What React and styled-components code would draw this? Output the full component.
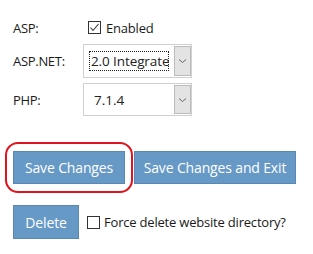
import React from "react";
import styled, { createGlobalStyle } from "styled-components";

const Global = createGlobalStyle`
  html, body { margin: 0; padding: 0; background: #fff; }
  body { font-family: "Open Sans", "Noto Sans", sans-serif; color: #222; }
`;

const Page = styled.div`
  position: relative;
  width: 313px;
  height: 254px;
  padding: 16px 0 0 13px;
  box-sizing: border-box;
`;

const Form = styled.div`
  display: grid;
  grid-template-columns: 70px auto;
  row-gap: 5px;
  align-items: center;
  justify-content: start;
`;

const Label = styled.div`
  font-size: 13px;
  line-height: 18px;
  color: #1a1a1a;
  letter-spacing: -0.3px;
`;

const CheckRow = styled.label`
  display: flex;
  align-items: center;
  gap: 5px;
  height: 23px;
  padding-left: ${(p) => p.$indent || 0}px;
  font-size: 13px;
  letter-spacing: -0.2px;
  color: #1a1a1a;
`;

const Box = styled.span`
  width: 13px;
  height: 13px;
  box-sizing: border-box;
  border: 1px solid #333;
  background: #fff;
  display: inline-flex;
  align-items: center;
  justify-content: center;
  flex: none;
`;

const Select = styled.div`
  width: 109px;
  height: ${(p) => p.$h}px;
  box-sizing: border-box;
  border: 1px solid #d0d0d0;
  background: #fff;
  display: flex;
  align-items: stretch;
  padding: 1px 0;
`;

const Value = styled.div`
  flex: 1;
  min-width: 0;
  display: flex;
  align-items: center;
  padding-left: ${(p) => p.$pad}px;
  font-size: 13.5px;
  color: #222;
  white-space: nowrap;
`;

const Focus = styled.span`
  display: block;
  width: 80px;
  height: 20px;
  line-height: 20px;
  outline: 1px dotted #222;
  outline-offset: -1px;
  padding-left: 2px;
  box-sizing: border-box;
  margin-left: -1px;
  white-space: nowrap;
  letter-spacing: -0.1px;
  overflow: hidden;
`;

const Drop = styled.div`
  width: 17px;
  box-sizing: border-box;
  border: 1px solid #bcbcbc;
  background: #e3e3e3;
  display: flex;
  align-items: center;
  justify-content: center;
`;

const Buttons = styled.div`
  display: flex;
  gap: 9px;
  margin-top: 35px;
`;

const Button = styled.button`
  height: ${(p) => p.$h || 33}px;
  width: ${(p) => p.$w}px;
  box-sizing: border-box;
  border: 1px solid #5a87b4;
  background: #6799c7;
  color: #fff;
  font-family: "Open Sans", sans-serif;
  font-size: 14px;
  letter-spacing: -0.15px;
  padding: 0;
  cursor: pointer;
`;

const Bottom = styled.div`
  display: flex;
  align-items: center;
  gap: 8px;
  margin-top: 21px;
`;

const Force = styled(CheckRow)`
  gap: 4px;
`;

const Mark = styled.div`
  position: absolute;
  left: 5px;
  top: 142px;
  width: 128px;
  height: 51px;
  box-sizing: border-box;
  border: 2px solid #e0141e;
  border-radius: 13px;
  pointer-events: none;
`;

const Chevron = () => (
  <svg width="9" height="6" viewBox="0 0 9 6">
    <path d="M1 1.5 L4.5 4.5 L8 1.5" fill="none" stroke="#666" strokeWidth="1" />
  </svg>
);

const Tick = () => (
  <svg width="11" height="11" viewBox="0 0 11 11">
    <path d="M1.5 5.5 L4 8.5 L9.5 2" fill="none" stroke="#333" strokeWidth="1.1" />
  </svg>
);

export default function App() {
  return (
    <>
      <Global />
      <Page>
        <Form>
          <Label>ASP:</Label>
          <CheckRow $indent={5}>
            <Box><Tick /></Box>
            Enabled
          </CheckRow>
          <Label>ASP.NET:</Label>
          <Select $h={34}>
            <Value $pad={6}>
              <Focus>2.0 Integrate</Focus>
            </Value>
            <Drop><Chevron /></Drop>
          </Select>
          <Label>PHP:</Label>
          <Select $h={33}>
            <Value $pad={10}>7.1.4</Value>
            <Drop><Chevron /></Drop>
          </Select>
        </Form>
        <Buttons>
          <Button $w={112}>Save Changes</Button>
          <Button $w={162}>Save Changes and Exit</Button>
        </Buttons>
        <Bottom>
          <Button $w={66} $h={34}>Delete</Button>
          <Force>
            <Box />
            Force delete website directory?
          </Force>
        </Bottom>
        <Mark />
      </Page>
    </>
  );
}
